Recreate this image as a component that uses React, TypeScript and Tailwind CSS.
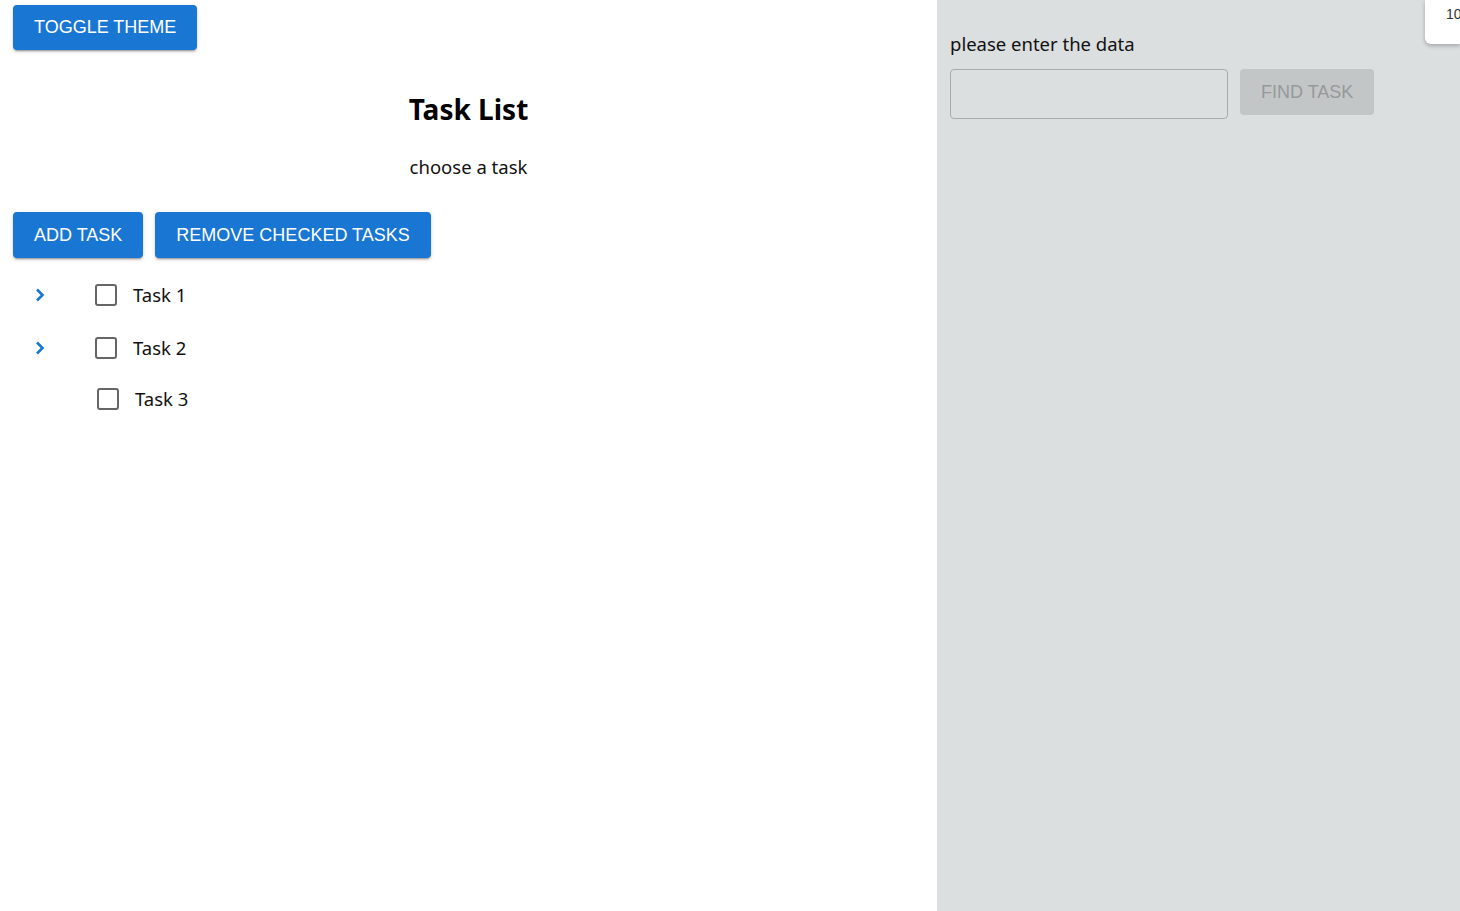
const tasks = [
    { id: 1, title: 'Task 1', hasChildren: true },
    { id: 2, title: 'Task 2', hasChildren: true },
    { id: 3, title: 'Task 3', hasChildren: false },
];

const btn =
    'rounded-[4px] bg-[#1976d2] text-white uppercase text-[18px] font-medium shadow-[0_3px_1px_-2px_rgba(0,0,0,0.2),0_2px_2px_0_rgba(0,0,0,0.14),0_1px_5px_0_rgba(0,0,0,0.12)]';

// expand arrow
const Chevron = () => (
    <svg viewBox="0 0 12 14" className="h-[14px] w-[12px]">
        <polyline points="3,1.5 8.5,7 3,12.5" fill="none" stroke="#1976d2" strokeWidth="2.6" />
    </svg>
);

export default function App() {
    return (
        <div className="flex min-h-[911px] w-full font-['Noto_Sans',sans-serif] text-[#111]">
            {/* task list side */}
            <div className="w-[937px] shrink-0 bg-white px-[13px] pt-[5px]">
                <button className={`${btn} h-[45px] px-[21px] font-['Liberation_Sans',sans-serif]`}>
                    Toggle theme
                </button>
                <h1 className="mt-[40px] text-center text-[28px] font-bold leading-[38px] text-black">Task List</h1>
                <p className="mt-[26px] text-center text-[18.5px] leading-[26px]">choose a task</p>
                <div className="mt-[32px] flex gap-[12px] font-['Liberation_Sans',sans-serif]">
                    <button className={`${btn} h-[46px] px-[21px]`}>Add task</button>
                    <button className={`${btn} h-[46px] px-[21px]`}>Remove checked tasks</button>
                </div>
                <ul className="mt-[10px]">
                    {tasks.map((t, i) => (
                        <li key={t.id} className={`flex items-center ${i === 2 ? 'h-[50px] pl-[2px]' : 'h-[53px]'}`}>
                            <span className="flex w-[82px] justify-start pl-[21px]">
                                {t.hasChildren && <Chevron />}
                            </span>
                            <span className="h-[22px] w-[22px] rounded-[3px] border-[2.5px] border-[#666]" />
                            <span className="ml-[16px] text-[18.5px] leading-[26px]">{t.title}</span>
                        </li>
                    ))}
                </ul>
            </div>

            {/* search side */}
            <div className="relative flex-1 bg-[#dcdfe0] px-[13px] pt-[30px]">
                <p className="text-[18.5px] leading-[28px]">please enter the data</p>
                <div className="mt-[11px] flex items-start gap-[12px]">
                    <input className="h-[50px] w-[278px] rounded-[4px] border border-[#a8abac] bg-transparent px-3 outline-none" />
                    <button
                        disabled
                        className="h-[46px] rounded-[4px] bg-[#c3c6c7] px-[21px] font-['Liberation_Sans',sans-serif] text-[18px] font-medium uppercase text-[#96999a]"
                    >
                        Find task
                    </button>
                </div>
                <div className="absolute right-0 top-0 h-[44px] w-[35px] overflow-hidden whitespace-nowrap rounded-bl-[6px] bg-white pl-[21px] pt-[4px] font-['Liberation_Sans',sans-serif] text-[14px] text-[#333] shadow-[0_2px_4px_rgba(0,0,0,0.25)]">
                    10
                </div>
            </div>
        </div>
    );
}
